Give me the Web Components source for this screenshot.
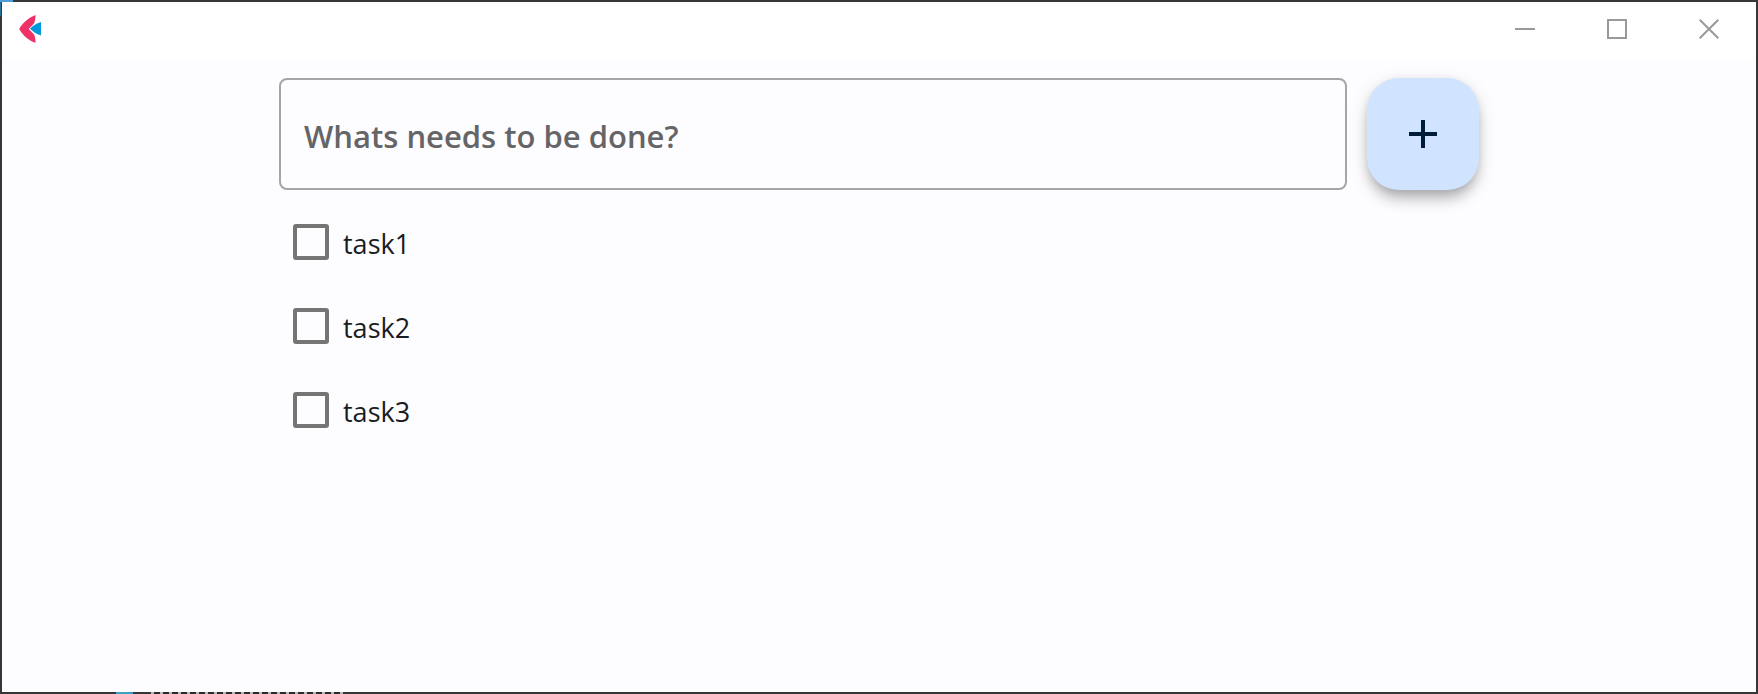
<!DOCTYPE html>
<html lang="en">
<head>
<meta charset="utf-8">
<meta name="viewport" content="width=device-width, initial-scale=1">
<title>To-do</title>
<style>
  html, body { height: 100%; margin: 0; }
  body { font-family: "Open Sans", "Noto Sans", sans-serif; }
</style>
</head>
<body>
<app-window>
  <title-bar slot="title"></title-bar>
  <todo-app>
    <task-entry slot="entry"></task-entry>
    <task-item>task1</task-item>
    <task-item>task2</task-item>
    <task-item>task3</task-item>
  </todo-app>
</app-window>

<script>
function define(name, markup) {
  const template = document.createElement('template');
  template.innerHTML = markup;
  customElements.define(name, class extends HTMLElement {
    constructor() {
      super();
      this.attachShadow({ mode: 'open' }).append(template.content.cloneNode(true));
    }
  });
}

/* The frame shows a thin strip of the dark desktop behind the window. */
define('app-window', `
<style>
  :host {
    display: flex; box-sizing: border-box; min-height: 100%; padding: 2px;
    background:
      linear-gradient(#4a9fd8, #4a9fd8) 0 0 / 13px 2px no-repeat,
      linear-gradient(#2f6f9c, #2f6f9c) 0 2px / 1px 14px no-repeat,
      linear-gradient(#3f9fc4, #3f9fc4) 116px 100% / 17px 2px no-repeat,
      repeating-linear-gradient(90deg, #b8b8b8 0 3px, #2c2b2c 3px 9px) 151px 100% / 192px 2px no-repeat,
      #383738;
  }
  .frame { flex: 1; display: flex; flex-direction: column; background: #fdfcff; }
  main { flex: 1; padding: 20px; }
</style>
<div class="frame"><slot name="title"></slot><main><slot></slot></main></div>`);

define('title-bar', `
<style>
  :host { display: flex; justify-content: space-between; height: 56px; background: #fff; }
  .logo { width: 24px; height: 30px; margin: 12px 0 0 16px; }
  .controls { display: flex; padding-right: 1px; }
  button {
    width: 92px; height: 54px; padding: 0; border: 0; background: none; color: #999;
    display: flex; align-items: center; justify-content: center;
  }
  svg { display: block; }
</style>
<svg class="logo" viewBox="0 0 24 30" aria-hidden="true">
  <path fill="#ee3167" d="M17.500 1C10 4 4.500 9 1.200 15C4.500 21 10 26 17.500 29C17.500 26 17.200 23 16 20.500L10.800 15L16 9.500C17.200 7 17.500 4 17.500 1Z"/>
  <path fill="#0098dc" d="M23 8V21.500C18.500 20 15 17.700 12 14.700C15 11.700 18.500 9.500 23 8Z"/>
</svg>
<div class="controls">
  <button aria-label="Minimize"><svg width="20" height="20" viewBox="0 0 20 20"><path d="M0 10H20" stroke="currentColor" stroke-width="2"/></svg></button>
  <button aria-label="Maximize"><svg width="20" height="20" viewBox="0 0 20 20"><path d="M1 1H19V19H1Z" fill="none" stroke="currentColor" stroke-width="2"/></svg></button>
  <button aria-label="Close"><svg width="20" height="20" viewBox="0 0 20 20"><path d="M.7.7L19.300 19.300M19.300.7L.7 19.300" stroke="currentColor" stroke-width="2"/></svg></button>
</div>`);

define('todo-app', `
<style>
  :host { display: block; max-width: 1200px; margin: 0 auto; }
  .tasks { display: flex; flex-direction: column; margin-top: 10px; }
</style>
<slot name="entry"></slot>
<div class="tasks"><slot></slot></div>`);

define('task-entry', `
<style>
  :host { display: block; }
  form { display: flex; gap: 20px; margin: 0; }
  input {
    flex: 1; min-width: 0; height: 112px; box-sizing: border-box; padding: 4px 23px 0;
    border: 2px solid #a5a5a7; border-radius: 8px; background: none; outline: none;
    font: 600 31px/44px "Open Sans", "Noto Sans", sans-serif; color: #1a1c1e;
  }
  input::placeholder { color: #656567; opacity: 1; }
  button {
    flex: none; width: 112px; height: 112px; padding: 0; border: 0; border-radius: 32px;
    display: flex; align-items: center; justify-content: center;
    background: #d1e4ff; color: #001d36;
    box-shadow: 0 12px 14px -4px rgba(0,0,0,.22), 0 6px 20px rgba(0,0,0,.12), 0 2px 8px rgba(0,0,0,.08);
  }
  svg { display: block; }
</style>
<form>
  <input type="text" placeholder="Whats needs to be done?" aria-label="Whats needs to be done?">
  <button type="button" aria-label="Add task"><svg width="28" height="28" viewBox="0 0 28 28"><path d="M14 0V28M0 14H28" stroke="currentColor" stroke-width="4"/></svg></button>
</form>`);

define('task-item', `
<style>
  :host { display: block; }
  label {
    display: flex; align-items: center; gap: 14px; height: 84px; padding-left: 14px;
    font-size: 27px; line-height: 40px; color: #1a1c1e;
  }
  input {
    appearance: none; flex: none; width: 36px; height: 36px; margin: 0; box-sizing: border-box;
    border: 4px solid #757575; border-radius: 3px;
  }
  input:checked { background: #757575; }
  span { padding-top: 4px; }
</style>
<label><input type="checkbox"><span><slot></slot></span></label>`);
</script>
</body>
</html>
